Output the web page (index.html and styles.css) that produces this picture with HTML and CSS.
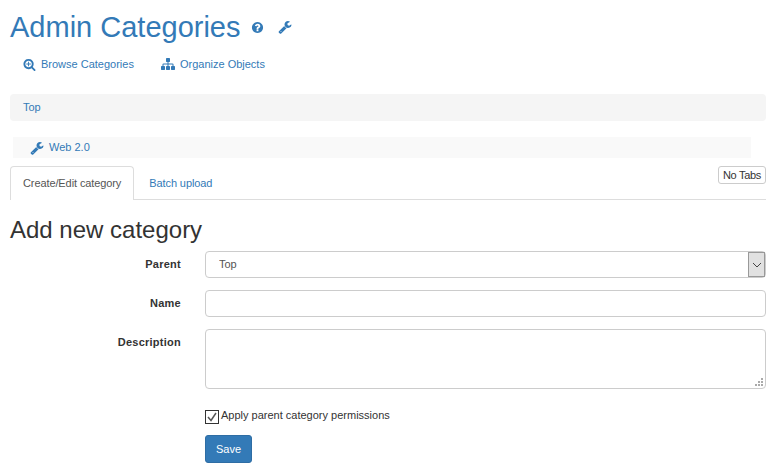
FILE: index.html
```html
<html lang="en"><head>
    <title>Admin Categories</title>
    <meta charset="utf-8">
    <link rel="stylesheet" href="styles.css">
  </head>
  <body>

  <div class="page-title">
    <h1><a href="#">Admin Categories</a></h1>
    <a class="title-icon" href="#"><svg width="13" height="13" viewBox="0 0 1792 1792"><path d="M1024 1376v-192q0-14-9-23t-23-9h-192q-14 0-23 9t-9 23v192q0 14 9 23t23 9h192q14 0 23-9t9-23zm256-672q0-88-55.5-163t-138.5-116-170-41q-243 0-371 213-15 24 8 42l132 100q7 6 19 6 16 0 25-12 53-68 86-92 34-24 86-24 48 0 85.5 26t37.5 59q0 38-20 61t-68 45q-63 28-115.5 86.5t-52.5 125.5v36q0 14 9 23t23 9h192q14 0 23-9t9-23q0-19 21.5-49.5t54.5-49.5q32-18 49-28.5t46-35 44.5-48 28-60.5 12.5-81zm384 192q0 209-103 385.5t-279.5 279.5-385.5 103-385.5-103-279.5-279.5-103-385.5 103-385.5 279.5-279.5 385.5-103 385.5 103 279.5 279.5 103 385.5z"/></svg></a>
    <a class="title-icon" href="#"><svg width="14" height="14" viewBox="0 0 1792 1792"><path d="M448 1472q0-26-19-45t-45-19-45 19-19 45 19 45 45 19 45-19 19-45zm644-420l-682 682q-37 37-90 37-52 0-91-37l-106-108q-38-36-38-90 0-53 38-91l681-681q39 98 114.5 173.5t173.5 114.5zm634-435q0 39-23 106-47 134-164.5 217.5t-258.5 83.5q-185 0-316.5-131.5t-131.5-316.5 131.5-316.5 316.5-131.5q58 0 121.5 16.5t107.5 46.5q16 11 16 28t-16 28l-293 169v224l193 107q5-3 79-48.5t135.5-81 70.5-35.5q15 0 23.5 10t8.5 25z"/></svg></a>
  </div>

  <div class="nav-links">
    <a href="#"><svg width="13" height="13" viewBox="0 0 1792 1792"><path d="M1088 800v64q0 13-9.5 22.5t-22.5 9.5h-224v224q0 13-9.5 22.5t-22.5 9.5h-64q-13 0-22.5-9.5t-9.5-22.5v-224h-224q-13 0-22.5-9.5t-9.5-22.5v-64q0-13 9.5-22.5t22.5-9.5h224v-224q0-13 9.5-22.5t22.5-9.5h64q13 0 22.5 9.5t9.5 22.5v224h224q13 0 22.5 9.5t9.5 22.5zm128 32q0-185-131.5-316.5t-316.5-131.5-316.5 131.5-131.5 316.5 131.5 316.5 316.5 131.5 316.5-131.5 131.5-316.5zm512 832q0 53-37.5 90.5t-90.5 37.5q-54 0-90-38l-343-342q-179 124-399 124-143 0-273.5-55.5t-225-150-150-225-55.5-273.5 55.5-273.5 150-225 225-150 273.5-55.5 273.5 55.5 225 150 150 225 55.5 273.5q0 220-124 399l343 343q37 37 37 90z"/></svg>Browse Categories</a>
    <a href="#"><svg width="14" height="14" viewBox="0 0 1792 1792"><path d="M1792 1248v320q0 40-28 68t-68 28h-320q-40 0-68-28t-28-68v-320q0-40 28-68t68-28h96v-192h-512v192h96q40 0 68 28t28 68v320q0 40-28 68t-68 28h-320q-40 0-68-28t-28-68v-320q0-40 28-68t68-28h96v-192h-512v192h96q40 0 68 28t28 68v320q0 40-28 68t-68 28h-320q-40 0-68-28t-28-68v-320q0-40 28-68t68-28h96v-192q0-52 38-90t90-38h512v-192h-96q-40 0-68-28t-28-68v-320q0-40 28-68t68-28h320q40 0 68 28t28 68v320q0 40-28 68t-68 28h-96v192h512q52 0 90 38t38 90v192h96q40 0 68 28t28 68z"/></svg>Organize Objects</a>
  </div>

  <div class="breadcrumb"><a href="#">Top</a></div>

  <div class="tree-row">
    <a href="#"><svg width="14" height="14" viewBox="0 0 1792 1792"><path d="M448 1472q0-26-19-45t-45-19-45 19-19 45 19 45 45 19 45-19 19-45zm644-420l-682 682q-37 37-90 37-52 0-91-37l-106-108q-38-36-38-90 0-53 38-91l681-681q39 98 114.5 173.5t173.5 114.5zm634-435q0 39-23 106-47 134-164.5 217.5t-258.5 83.5q-185 0-316.5-131.5t-131.5-316.5 131.5-316.5 316.5-131.5q58 0 121.5 16.5t107.5 46.5q16 11 16 28t-16 28l-293 169v224l193 107q5-3 79-48.5t135.5-81 70.5-35.5q15 0 23.5 10t8.5 25z"/></svg><span class="tree-name">Web 2.0</span></a>
  </div>

  <div class="tabs">
    <span class="tab active">Create/Edit category</span>
    <a class="tab" href="#">Batch upload</a>
    <button class="no-tabs" type="button">No Tabs</button>
  </div>

  <h2>Add new category</h2>

  <form class="cat-form">
    <div class="form-row">
      <label>Parent</label>
      <div class="select-wrap">
        <select><option>Top</option></select>
        <span class="select-arrow"><svg width="10" height="6" viewBox="0 0 10 6"><path d="M1 1l4 4 4-4" fill="none" stroke="#444" stroke-width="1"/></svg></span>
      </div>
    </div>
    <div class="form-row">
      <label>Name</label>
      <input type="text">
    </div>
    <div class="form-row">
      <label>Description</label>
      <div class="text-wrap">
        <textarea></textarea>
        <svg class="grip" width="8" height="8" viewBox="0 0 8 8"><path d="M6 0h2v2H6zM3 3h2v2H3zM6 3h2v2H6zM0 6h2v2H0zM3 6h2v2H3zM6 6h2v2H6z"/></svg>
      </div>
    </div>
    <div class="form-row check-row">
      <label class="check-label"><svg width="14" height="14" viewBox="0 0 14 14"><rect x="0.5" y="0.5" width="13" height="13" fill="#fff" stroke="#333"/><path d="M3 7l3 3.5 5-7.5" fill="none" stroke="#555" stroke-width="1.5"/></svg>Apply parent category permissions</label>
    </div>
    <div class="form-row save-row">
      <button class="save" type="button">Save</button>
    </div>
  </form>

</body></html>
```

FILE: styles.css
```css
html {
  height: 100%;
}
body {
  margin: 0;
  padding: 0 15px 0 10px;
  background: #fff;
  color: #333;
  font-family: "Liberation Sans", Arial, sans-serif;
  font-size: 11px;
  line-height: 16px;
}

a {
  color: #337ab7;
  text-decoration: none;
}
svg {
  fill: #337ab7;
  flex: none;
}

.page-title {
  display: flex;
  align-items: center;
  height: 34px;
  padding-top: 10px;
}
h1 {
  margin: 0;
  font-size: 29px;
  font-weight: 400;
  line-height: 34px;
}
.title-icon {
  display: flex;
  margin-left: 10px;
}
.title-icon + .title-icon {
  margin-left: 14px;
}

.nav-links {
  display: flex;
  gap: 27px;
  padding: 12px 0 0 13px;
  height: 28px;
}
.nav-links a {
  display: flex;
  align-items: center;
  gap: 5px;
  height: 16px;
}

.breadcrumb {
  height: 27px;
  margin-top: 10px;
  padding: 0 13px;
  background: #f5f5f5;
  border-radius: 4px;
  line-height: 27px;
  box-sizing: border-box;
}

.tree-row {
  display: flex;
  align-items: center;
  height: 21px;
  margin: 16px 15px 0 3px;
  padding-left: 17px;
  background: #f9f9f9;
}
.tree-row a {
  display: flex;
  align-items: center;
  gap: 5px;
}
.tree-name {
  margin-top: -1px;
}

.tabs {
  display: flex;
  align-items: flex-end;
  position: relative;
  height: 33px;
  margin-top: 8px;
  border-bottom: 1px solid #ddd;
}
.tab {
  height: 33px;
  padding: 0 13px 0 14px;
  line-height: 33px;
  border: 1px solid transparent;
  border-bottom: 0;
  border-radius: 4px 4px 0 0;
  box-sizing: border-box;
  letter-spacing: -.1px;
}
.tab.active {
  background: #fff;
  color: #555;
  border-color: #ddd;
  height: 34px;
  padding: 0 12px;
  margin-bottom: -1px;
}
.no-tabs {
  position: absolute;
  top: 0;
  right: 0;
  height: 18px;
  padding: 0 4px;
  background: #fff;
  color: #333;
  font: 11px/16px "Liberation Sans", Arial, sans-serif;
  letter-spacing: -.3px;
  border: 1px solid #ccc;
  border-radius: 3px;
}

h2 {
  margin: 16px 0 7px;
  font-size: 24px;
  font-weight: 400;
  line-height: 28px;
  color: #333;
}

.cat-form {
  display: flex;
  flex-direction: column;
  gap: 12px;
}
.form-row {
  display: flex;
  gap: 24px;
}
.form-row > label {
  width: 171px;
  flex: none;
  padding-top: 5px;
  font-weight: 700;
  text-align: right;
  letter-spacing: .25px;
}
.select-wrap,
.text-wrap {
  position: relative;
  flex: 1;
  display: flex;
}
select,
input,
textarea {
  flex: 1;
  min-width: 0;
  margin: 0;
  background: #fff;
  color: #555;
  font: 11px/16px "Liberation Sans", Arial, sans-serif;
  border: 1px solid #ccc;
  border-radius: 4px;
  box-sizing: border-box;
  outline: 0;
}
select {
  height: 27px;
  padding: 0 13px 2px;
  appearance: none;
  -webkit-appearance: none;
}
.select-arrow {
  position: absolute;
  top: 1px;
  right: 1px;
  width: 17px;
  height: 25px;
  display: flex;
  align-items: center;
  justify-content: center;
  background: #e1e1e1;
  border: 1px solid #999;
  box-sizing: border-box;
}
.select-arrow svg {
  fill: none;
}
input {
  height: 27px;
}
textarea {
  height: 60px;
  display: block;
  resize: none;
}
.grip {
  position: absolute;
  right: 3px;
  bottom: 3px;
  fill: #aaa;
}

.check-row {
  padding: 9px 0 0 195px;
}
.form-row > .check-label {
  display: flex;
  gap: 2px;
  width: auto;
  padding: 0;
  font-weight: 400;
  line-height: 11px;
  text-align: left;
  letter-spacing: 0;
}
.save-row {
  padding-left: 195px;
  margin-top: -1px;
}
.save {
  width: 47px;
  height: 28px;
  padding: 0;
  background: #337ab7;
  color: #fff;
  font: 11px/16px "Liberation Sans", Arial, sans-serif;
  border: 1px solid #2e6da4;
  border-radius: 3px;
}
```
